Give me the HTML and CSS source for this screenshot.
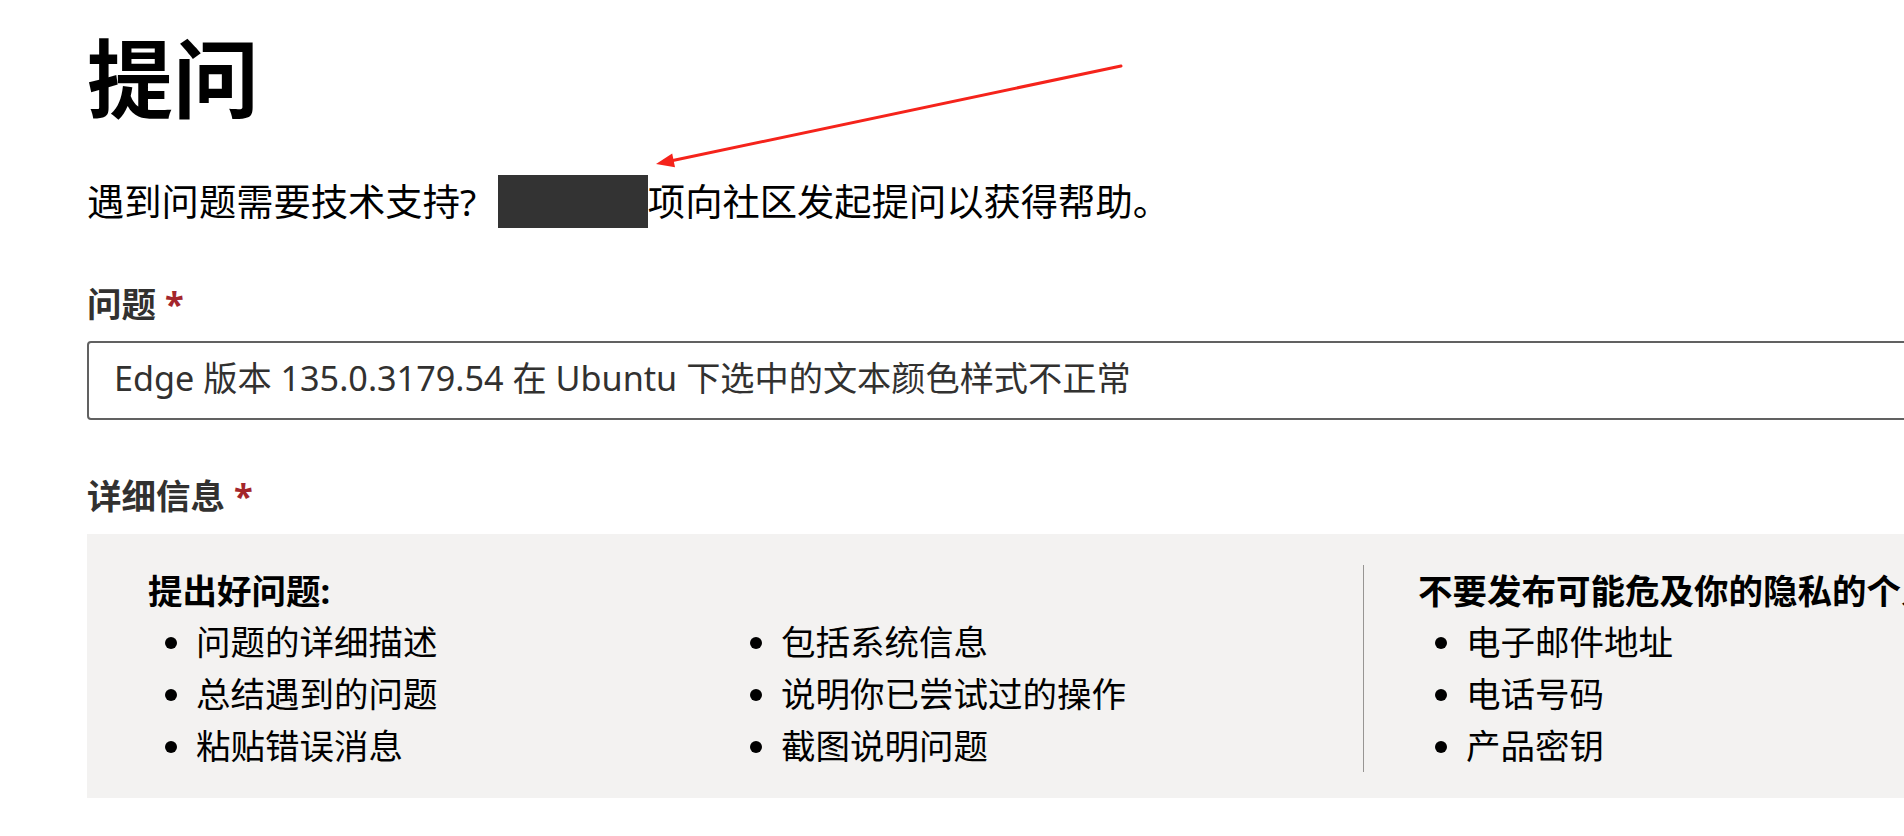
FILE: index.html
```html
<!DOCTYPE html>
<html lang="zh-CN">
<head>
<meta charset="utf-8">
<title>提问</title>
<link rel="stylesheet" href="styles.css">
</head>
<body>
<svg class="annot" width="1904" height="836" viewBox="0 0 1904 836" aria-hidden="true">
  <line x1="1121" y1="66" x2="668" y2="161.5" stroke="#f5231b" stroke-width="3" stroke-linecap="round"/>
  <polygon points="656,164 672.2,153.4 675,167.2" fill="#f5231b"/>
</svg>
<main class="page">
  <h1 class="title">提问</h1>
  <p class="intro">遇到问题需要技术支持? <span class="redact"></span>项向社区发起提问以获得帮助。</p>
  <label class="label" for="q">问题 <span class="req">*</span></label>
  <input id="q" class="field" type="text" value="Edge 版本 135.0.3179.54 在 Ubuntu 下选中的文本颜色样式不正常" readonly>
  <div class="label">详细信息 <span class="req">*</span></div>
  <section class="tips">
    <div class="tips-good">
      <h2 class="tips-title">提出好问题:</h2>
      <ul class="tips-list two-col">
        <li>问题的详细描述</li>
        <li>总结遇到的问题</li>
        <li>粘贴错误消息</li>
        <li>包括系统信息</li>
        <li>说明你已尝试过的操作</li>
        <li>截图说明问题</li>
      </ul>
    </div>
    <div class="tips-sep"></div>
    <div class="tips-privacy">
      <h2 class="tips-title">不要发布可能危及你的隐私的个人信息:</h2>
      <ul class="tips-list">
        <li>电子邮件地址</li>
        <li>电话号码</li>
        <li>产品密钥</li>
      </ul>
    </div>
  </section>
</main>
</body>
</html>
```
FILE: styles.css
```css
html, body {
  margin: 0;
  padding: 0;
  overflow: hidden;
  background: #fff;
}
body {
  width: 1904px;
  height: 836px;
  position: relative;
  font-family: "Segoe UI", "Noto Sans", "Noto Sans CJK SC", sans-serif;
  color: #000;
}
.annot {
  position: absolute;
  top: 0;
  left: 0;
  pointer-events: none;
  z-index: 2;
}
.page {
  padding-left: 87px;
  width: 2100px;
}
.title {
  font-size: 86px;
  line-height: 112px;
  font-weight: 700;
  margin: 23px 0 0;
}
.intro {
  font-size: 37.3px;
  line-height: 53px;
  margin: 40px 0 0;
}
.redact {
  display: inline-block;
  width: 150px;
  height: 53px;
  background: #333;
  vertical-align: top;
  margin-left: 12px;
}
.label {
  display: block;
  font-size: 34.5px;
  line-height: 51.75px;
  font-weight: 700;
  color: #323130;
  margin-top: 50px;
}
.req {
  color: #a4262c;
}
.field {
  display: block;
  box-sizing: border-box;
  width: 1900px;
  height: 79px;
  margin: 11px 0 0;
  border: 2px solid #616161;
  border-radius: 4px;
  padding: 0 25px 9px;
  font-family: inherit;
  font-size: 34.2px;
  color: #323130;
  background: #fff;
  outline: none;
}
.tips {
  display: flex;
  box-sizing: border-box;
  width: 2000px;
  margin-top: 12px;
  padding: 31px 0 26px 61px;
  background: #f3f2f1;
  font-size: 34.5px;
  line-height: 51.75px;
}
.tips-good {
  flex: none;
  width: 1159px;
}
.tips-sep {
  flex: none;
  width: 1px;
  background: #979593;
  margin: 0 54px 0 56px;
}
.tips-privacy {
  flex: none;
  white-space: nowrap;
}
.tips-title {
  font-size: inherit;
  line-height: inherit;
  font-weight: 700;
  margin: 0;
}
.tips-list {
  margin: 0;
  padding-left: 48px;
}
.two-col {
  column-count: 2;
  column-gap: 59px;
}
```
